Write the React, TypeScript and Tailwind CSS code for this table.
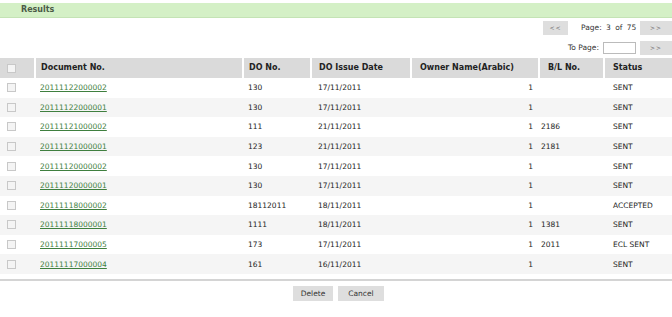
import React from 'react';

interface Row {
  doc: string;
  doNo: string;
  date: string;
  owner: string;
  bl: string;
  status: string;
}

const rows: Row[] = [
  { doc: '20111122000002', doNo: '130', date: '17/11/2011', owner: '1', bl: '', status: 'SENT' },
  { doc: '20111122000001', doNo: '130', date: '17/11/2011', owner: '1', bl: '', status: 'SENT' },
  { doc: '20111121000002', doNo: '111', date: '21/11/2011', owner: '1', bl: '2186', status: 'SENT' },
  { doc: '20111121000001', doNo: '123', date: '21/11/2011', owner: '1', bl: '2181', status: 'SENT' },
  { doc: '20111120000002', doNo: '130', date: '17/11/2011', owner: '1', bl: '', status: 'SENT' },
  { doc: '20111120000001', doNo: '130', date: '17/11/2011', owner: '1', bl: '', status: 'SENT' },
  { doc: '20111118000002', doNo: '18112011', date: '18/11/2011', owner: '1', bl: '', status: 'ACCEPTED' },
  { doc: '20111118000001', doNo: '1111', date: '18/11/2011', owner: '1', bl: '1381', status: 'SENT' },
  { doc: '20111117000005', doNo: '173', date: '17/11/2011', owner: '1', bl: '2011', status: 'ECL SENT' },
  { doc: '20111117000004', doNo: '161', date: '16/11/2011', owner: '1', bl: '', status: 'SENT' },
];

function Box() {
  return <span className="block w-[9px] h-[9px] border border-[#c8c8c8] bg-[#f4f4f4]" />;
}

function SmallBtn({ label }: { label: string }) {
  return (
    <button className="w-[32px] h-[14px] bg-[#dedede] text-[6px] leading-[14px] text-[#666] tracking-[1px]">
      {label}
    </button>
  );
}

export default function App() {
  return (
    <div className="w-[672px] h-[317px] bg-white text-[#222] text-[7.5px] overflow-hidden" style={{ fontFamily: '"DejaVu Sans", Verdana, sans-serif' }}>
      <div className="h-[3px]" />
      <div className="h-[15px] bg-[#d4f0c6] border-b border-[#c4e3b5] pl-[21px] flex items-center font-bold text-[8px] text-[#4b5a48]">
        Results
      </div>

      <div className="flex flex-col items-end gap-[6px] mt-[3px]">
        <div className="flex items-center h-[14px]">
          <button className="w-[25px] h-[14px] bg-[#dedede] text-[6px] leading-[14px] text-[#666] tracking-[1px]">&lt;&lt;</button>
          <span className="ml-[13px] w-[59px] text-[#333] [word-spacing:2px]">Page: 3 of 75</span>
          <SmallBtn label="&gt;&gt;" />
        </div>
        <div className="flex items-center h-[14px]">
          <span className="text-[#333] mr-[4px]">To Page:</span>
          <span className="block w-[33px] h-[12px] border border-[#bbb] bg-white mr-[4px]" />
          <SmallBtn label="&gt;&gt;" />
        </div>
      </div>

      <table className="w-[672px] mt-[3px] border-collapse table-fixed">
        <colgroup>
          <col className="w-[35px]" />
          <col className="w-[208px]" />
          <col className="w-[68px]" />
          <col className="w-[100px]" />
          <col className="w-[128px]" />
          <col className="w-[65px]" />
          <col className="w-[68px]" />
        </colgroup>
        <thead>
          <tr className="h-[20px] bg-[#dadada] text-left font-bold text-[8px] text-[#222]">
            <th className="pl-[7px] border-r-2 border-white"><Box /></th>
            <th className="pl-[5px] border-r-2 border-white">Document No.</th>
            <th className="pl-[5px] border-r-2 border-white">DO No.</th>
            <th className="pl-[7px] border-r-2 border-white">DO Issue Date</th>
            <th className="pl-[8px] border-r-2 border-white">Owner Name(Arabic)</th>
            <th className="pl-[8px] border-r-2 border-white">B/L No.</th>
            <th className="pl-[8px]">Status</th>
          </tr>
        </thead>
        <tbody>
          {rows.map((r, i) => (
            <tr key={r.doc} className={`h-[19.6px] ${i % 2 === 1 ? 'bg-[#f5f5f5]' : 'bg-white'}`}>
              <td className="pl-[7px]"><Box /></td>
              <td className="pl-[5px]">
                <a className="text-[#3f7f3f] underline" href="#">{r.doc}</a>
              </td>
              <td className="pl-[5px]">{r.doNo}</td>
              <td className="pl-[7px]">{r.date}</td>
              <td className="text-right pr-[6px]">{r.owner}</td>
              <td className="pl-[2px]">{r.bl}</td>
              <td className="pl-[9px]">{r.status}</td>
            </tr>
          ))}
        </tbody>
      </table>

      <div className="mt-[5px] h-[2px] bg-[#d4d4d4]" />

      <div className="flex justify-center gap-[5px] mt-[5px] pl-[5px]">
        <button className="w-[40px] h-[15px] bg-[#dedede] text-[7.5px] text-[#333]">Delete</button>
        <button className="w-[46px] h-[15px] bg-[#dedede] text-[7.5px] text-[#333]">Cancel</button>
      </div>
    </div>
  );
}
